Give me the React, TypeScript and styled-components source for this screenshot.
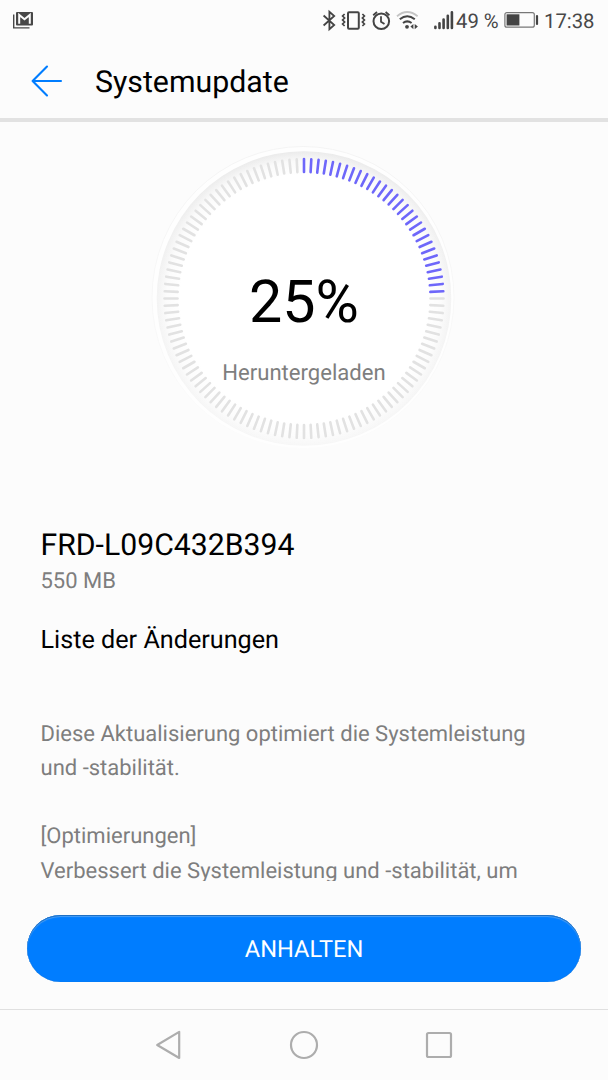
import React from "react";
import styled, { createGlobalStyle } from "styled-components";

const GlobalStyle = createGlobalStyle`
  * { box-sizing: border-box; }
  html, body { margin: 0; padding: 0; background: #fcfcfc; }
  body {
    font-family: Roboto, "Liberation Sans", sans-serif;
    color: #000;
    overflow: hidden;
    text-rendering: geometricPrecision;
  }
`;

const Screen = styled.div`
  width: 608px;
  height: 1080px;
  display: flex;
  flex-direction: column;
  background: #fcfcfc;
  overflow: hidden;
`;

const StatusBar = styled.div`
  height: 40px;
  flex: none;
  display: flex;
  align-items: center;
  padding: 0 13px 0 12px;
  color: #484848;
`;

const StatusIcons = styled.div`
  margin-left: auto;
  display: flex;
  align-items: center;
`;

const StatusText = styled.span<{ $size: number; $width: number; $top?: number }>`
  width: ${(p) => p.$width}px;
  padding-top: ${(p) => p.$top ?? 0}px;
  font-size: ${(p) => p.$size}px;
  line-height: 40px;
  white-space: nowrap;
`;

const Battery = styled.svg`
  margin: 0 5px 0 5px;
`;

const Header = styled.header`
  height: 82px;
  flex: none;
  display: flex;
  align-items: center;
  padding: 4px 0 0 31px;
  border-bottom: 4px solid #e2e2e2;
`;

const Title = styled.h1`
  margin: 4px 0 0 32px;
  font-size: 30.3px;
  font-weight: 400;
  line-height: 40px;
`;

const DialArea = styled.section`
  height: 405px;
  flex: none;
  display: flex;
  justify-content: center;
  padding-top: 20px;
`;

const Dial = styled.div`
  width: 312px;
  height: 312px;
  display: grid;
`;

const DialFace = styled.svg`
  grid-area: 1 / 1;
`;

const DialLabels = styled.div`
  grid-area: 1 / 1;
  display: flex;
  flex-direction: column;
  align-items: center;
`;

const Percent = styled.div`
  margin-top: 126px;
  font-size: 59.2px;
  line-height: 70px;
`;

const DialCaption = styled.div`
  margin-top: 20px;
  font-size: 22.1px;
  line-height: 30px;
  color: #7e7e7e;
`;

const Details = styled.section`
  height: 354px;
  flex: none;
  padding: 0 40.5px;
  overflow: hidden;
`;

const Version = styled.h2`
  margin: 0;
  font-size: 30.2px;
  font-weight: 400;
  line-height: 38px;
`;

const Size = styled.div`
  margin-top: 0.6px;
  font-size: 22px;
  line-height: 32px;
  color: #7e7e7e;
`;

const ListHeading = styled.h3`
  margin: 26px 0 0;
  font-size: 25.2px;
  font-weight: 400;
  line-height: 34px;
`;

const Notes = styled.div`
  margin-top: 60px;
  font-size: 22px;
  line-height: 34.3px;
  color: #7e7e7e;
  white-space: pre;
`;

const ButtonRow = styled.div`
  height: 128px;
  flex: none;
  padding: 34px 27px 0;
`;

const PauseButton = styled.button`
  display: block;
  width: 554px;
  height: 67px;
  border: 0;
  border-radius: 34px;
  background: #007dff;
  box-shadow: inset 0 1px 0 #1d6fc4, inset 0 2px 1px #4a9ff5, inset 0 0 1px #1d6fc4;
  color: #fff;
  font: 400 23.6px/67px Roboto, "Liberation Sans", sans-serif;
  text-rendering: inherit;
  padding: 1px 0 0;
`;

const NavBar = styled.nav`
  flex: 1;
  display: flex;
  justify-content: center;
  align-items: center;
  gap: 105px;
  padding-bottom: 1px;
  border-top: 1px solid #e0e0e0;
`;

const TICKS = 120;
const PROGRESS = 25;

const ProgressDial = () => (
  <DialFace width="312" height="312" viewBox="0 0 312 312">
    <defs>
      <linearGradient id="rim" x1="0" y1="0" x2="0" y2="1">
        <stop offset="0" stopColor="#ebebeb" />
        <stop offset="0.5" stopColor="#f3f3f3" />
        <stop offset="1" stopColor="#f7f7f7" />
      </linearGradient>
      <linearGradient id="halo" x1="0" y1="0" x2="0" y2="1">
        <stop offset="0" stopColor="#f4f4f4" />
        <stop offset="0.6" stopColor="#f8f8f8" />
        <stop offset="1" stopColor="#fcfcfc" />
      </linearGradient>
      <radialGradient id="face">
        <stop offset="0.84" stopColor="#fff" />
        <stop offset="0.93" stopColor="#fff" stopOpacity="0.75" />
        <stop offset="1" stopColor="#fff" stopOpacity="0" />
      </radialGradient>
    </defs>
    <circle cx="155" cy="155.5" r="151" fill="#fefefe" stroke="url(#halo)" />
    <circle cx="156" cy="156.5" r="147.3" fill="url(#rim)" />
    <circle cx="156" cy="156.5" r="147.3" fill="url(#face)" />
    {Array.from({ length: TICKS }, (_, i) => (
      <line
        key={i}
        x1="156"
        x2="156"
        y1="17"
        y2="30"
        strokeWidth="2.6"
        strokeLinecap="round"
        stroke={i < (TICKS * PROGRESS) / 100 ? "#6e67fa" : "#e2e2e2"}
        transform={`rotate(${(i * 360) / TICKS} 156 156.5)`}
      />
    ))}
  </DialFace>
);

const MailIcon = () => (
  <svg width="22" height="18" viewBox="0 0 22 18">
    <path d="M1.7 3.5V16.9H17.5" fill="none" stroke="#484848" strokeWidth="1.4" />
    <rect x="4" y="1" width="17" height="13.6" rx="1" fill="#484848" />
    <path d="M7.2 12.7V3.9L12.5 8.3L17.8 3.9V12.7" fill="none" stroke="#fcfcfc" strokeWidth="2" />
  </svg>
);

const SystemIcons = () => (
  <svg width="136" height="24" viewBox="320 8 136 24" fill="none" stroke="#444">
    <path d="M323.6 15.5L334.2 25L329.4 29.2V11.8L334.2 16L323.6 25.5" strokeWidth="1.8" />
    <rect x="348" y="12.3" width="10.8" height="16.4" rx="1" strokeWidth="2" />
    <path d="M344.6 14l-2 2 2 2-2 2 2 2-2 2 2 2M362.4 14l2 2-2 2 2 2-2 2 2 2-2 2" strokeWidth="1.7" />
    <circle cx="381.3" cy="21.2" r="7.8" strokeWidth="2" />
    <path d="M381 16.3V21.7L384.5 24M373.2 15.2L377 12M389.4 15.2L385.6 12" strokeWidth="1.8" />
    <path d="M397 16.2Q407.2 7.8 417.6 16.2" stroke="#c4c4c4" strokeWidth="1.8" />
    <path d="M399.8 19.3Q407.2 13.3 414.8 19.3M403 23Q407.2 19.7 411.6 23" strokeWidth="2" />
    <circle cx="407" cy="26.8" r="1.9" fill="#444" stroke="none" />
    <path d="M413.4 24v5.2l-3-2.6zM414.7 24v5.2l3.2-2.6z" fill="#444" stroke="none" />
    <path d="M435.4 26.8V28M439.5 23.2V28M443.6 19.5V28M447.8 15.8V28M451.9 12.2V28" strokeWidth="2.6" strokeLinecap="round" />
  </svg>
);

const App = () => (
  <>
    <GlobalStyle />
    <Screen>
      <StatusBar>
        <MailIcon />
        <StatusIcons>
          <SystemIcons />
          <StatusText $size={20.3} $width={43} $top={1}>49 %</StatusText>
          <Battery width="35" height="18" viewBox="0 0 35 18">
            <rect x="0.9" y="1.6" width="29.4" height="14.6" rx="2" fill="none" stroke="#777" strokeWidth="1.2" />
            <rect x="2.6" y="3.3" width="12.8" height="11.2" fill="#444" />
            <path d="M33 5V13" stroke="#444" strokeWidth="2.2" strokeLinecap="round" />
          </Battery>
          <StatusText $size={20.3} $width={51} $top={2}>17:38</StatusText>
        </StatusIcons>
      </StatusBar>
      <Header>
        <svg width="32" height="32" viewBox="0 0 32 32" fill="none" stroke="#007dff" strokeWidth="2.1" strokeLinecap="round" strokeLinejoin="round">
          <path d="M30 16H1.6M16 1.6L1.6 16L16 30.4" />
        </svg>
        <Title>Systemupdate</Title>
      </Header>
      <DialArea>
        <Dial>
          <ProgressDial />
          <DialLabels>
            <Percent>25%</Percent>
            <DialCaption>Heruntergeladen</DialCaption>
          </DialLabels>
        </Dial>
      </DialArea>
      <Details>
        <Version>FRD-L09C432B394</Version>
        <Size>550 MB</Size>
        <ListHeading>Liste der Änderungen</ListHeading>
        <Notes>{`Diese Aktualisierung optimiert die Systemleistung
und -stabilität.

[Optimierungen]
Verbessert die Systemleistung und -stabilität, um`}</Notes>
      </Details>
      <ButtonRow>
        <PauseButton>ANHALTEN</PauseButton>
      </ButtonRow>
      <NavBar>
        <svg width="30" height="30" viewBox="0 0 30 30" fill="none" stroke="#adadad" strokeWidth="2.2">
          <path d="M25.2 1.9V28L3.2 15Z" strokeLinejoin="round" />
        </svg>
        <svg width="30" height="30" viewBox="0 0 30 30" fill="none" stroke="#adadad" strokeWidth="2.2">
          <circle cx="15" cy="15" r="13" />
        </svg>
        <svg width="30" height="30" viewBox="0 0 30 30" fill="none" stroke="#adadad" strokeWidth="2.2">
          <rect x="3" y="3" width="24" height="24" rx="1.5" />
        </svg>
      </NavBar>
    </Screen>
  </>
);

export default App;
